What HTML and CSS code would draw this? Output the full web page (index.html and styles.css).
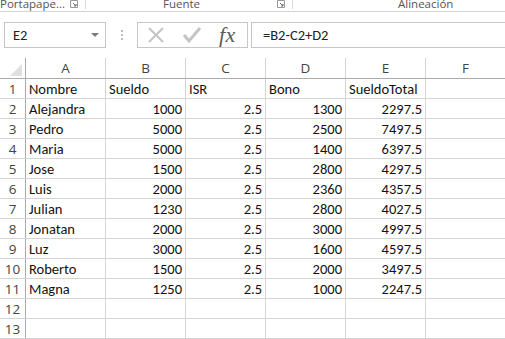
FILE: index.html
```html
<!DOCTYPE html>
<html lang="es">
<head>
  <meta charset="UTF-8">
  <title>Hoja de cálculo</title>
  <link rel="stylesheet" href="styles.css">
</head>
<body>
  <!-- grupos de la cinta -->
  <div class="ribbon">
    <div class="group g-clip">
      <span class="group-label">Portapape...</span>
      <svg class="launcher" width="8" height="8" viewBox="0 0 8 8"><path d="M0.5 0.5h7v7h-7z" fill="none" stroke="#9a9a9a"/><path d="M3 3l3 3M4 6h2v-2" fill="none" stroke="#6a6a6a"/></svg>
    </div>
    <div class="group g-font">
      <span class="group-label">Fuente</span>
      <svg class="launcher" width="8" height="8" viewBox="0 0 8 8"><path d="M0.5 0.5h7v7h-7z" fill="none" stroke="#9a9a9a"/><path d="M3 3l3 3M4 6h2v-2" fill="none" stroke="#6a6a6a"/></svg>
    </div>
    <div class="group g-align">
      <span class="group-label">Alineación</span>
    </div>
  </div>

  <!-- barra de fórmulas -->
  <div class="formula-bar">
    <div class="name-box">
      <span>E2</span>
      <span class="caret"></span>
    </div>
    <div class="grip"><i></i><i></i><i></i></div>
    <div class="fx-buttons">
      <svg width="18" height="18" viewBox="0 0 18 18"><path d="M2 2l14 14M16 2L2 16" stroke="#c4c4c4" stroke-width="2" fill="none"/></svg>
      <svg width="20" height="18" viewBox="0 0 20 18"><path d="M2 9l5 6L18 2" stroke="#c4c4c4" stroke-width="3" fill="none"/></svg>
      <span class="fx">fx</span>
    </div>
    <div class="formula-input">=B2-C2+D2</div>
  </div>

  <!-- hoja -->
  <table class="sheet">
    <thead>
      <tr>
        <th class="corner"><span class="tri"></span></th>
        <th>A</th><th>B</th><th>C</th><th>D</th><th>E</th><th>F</th>
      </tr>
    </thead>
    <tbody>
      <tr><th>1</th><td>Nombre</td><td>Sueldo</td><td>ISR</td><td>Bono</td><td>SueldoTotal</td><td></td></tr>
      <tr><th>2</th><td>Alejandra</td><td class="n">1000</td><td class="n">2.5</td><td class="n">1300</td><td class="n">2297.5</td><td></td></tr>
      <tr><th>3</th><td>Pedro</td><td class="n">5000</td><td class="n">2.5</td><td class="n">2500</td><td class="n">7497.5</td><td></td></tr>
      <tr><th>4</th><td>Maria</td><td class="n">5000</td><td class="n">2.5</td><td class="n">1400</td><td class="n">6397.5</td><td></td></tr>
      <tr><th>5</th><td>Jose</td><td class="n">1500</td><td class="n">2.5</td><td class="n">2800</td><td class="n">4297.5</td><td></td></tr>
      <tr><th>6</th><td>Luis</td><td class="n">2000</td><td class="n">2.5</td><td class="n">2360</td><td class="n">4357.5</td><td></td></tr>
      <tr><th>7</th><td>Julian</td><td class="n">1230</td><td class="n">2.5</td><td class="n">2800</td><td class="n">4027.5</td><td></td></tr>
      <tr><th>8</th><td>Jonatan</td><td class="n">2000</td><td class="n">2.5</td><td class="n">3000</td><td class="n">4997.5</td><td></td></tr>
      <tr><th>9</th><td>Luz</td><td class="n">3000</td><td class="n">2.5</td><td class="n">1600</td><td class="n">4597.5</td><td></td></tr>
      <tr><th>10</th><td>Roberto</td><td class="n">1500</td><td class="n">2.5</td><td class="n">2000</td><td class="n">3497.5</td><td></td></tr>
      <tr><th>11</th><td>Magna</td><td class="n">1250</td><td class="n">2.5</td><td class="n">1000</td><td class="n">2247.5</td><td></td></tr>
      <tr><th>12</th><td></td><td></td><td></td><td></td><td></td><td></td></tr>
      <tr><th>13</th><td></td><td></td><td></td><td></td><td></td><td></td></tr>
    </tbody>
  </table>
</body>
</html>
```

FILE: styles.css
```css
body {
  margin: 0;
  background: #fff;
  font-family: "Open Sans", "Noto Sans", sans-serif;
  overflow: hidden;
  width: 505px;
}
.ribbon {
  display: flex;
  height: 11px;
  border-bottom: 1px solid #d5d5d5;
  overflow: hidden;
}
.group {
  display: flex;
  align-items: flex-start;
  height: 9px;
  border-right: 1px solid #dadada;
  box-sizing: border-box;
}
.group-label {
  font-size: 11.5px;
  line-height: 12px;
  margin-top: -2px;
  color: #555;
  white-space: nowrap;
}
.launcher {
  margin-left: auto;
  margin-right: 7px;
  flex-shrink: 0;
}
.g-clip {
  width: 86px;
  padding-left: 0;
}
.g-font {
  width: 207px;
  padding-left: 77px;
}
.g-align {
  border-right: none;
  padding-left: 105px;
}
.formula-bar {
  display: flex;
  align-items: center;
  margin-top: 10px;
  height: 26px;
}
.name-box {
  margin-left: 4px;
  box-sizing: border-box;
  width: 102px;
  height: 26px;
  border: 1px solid #c6c6c6;
  display: flex;
  align-items: center;
  justify-content: space-between;
  padding: 0 6px 0 8px;
  font-family: "Carlito", "Lato", sans-serif;
  font-size: 14.5px;
  color: #222;
}
.caret {
  width: 0;
  height: 0;
  border-left: 4px solid transparent;
  border-right: 4px solid transparent;
  border-top: 4px solid #7a7a7a;
}
.grip {
  width: 31px;
  display: flex;
  flex-direction: column;
  align-items: center;
  gap: 2px;
}
.grip i {
  width: 2px;
  height: 2px;
  background: #bdbdbd;
}
.fx-buttons {
  width: 111px;
  height: 26px;
  box-sizing: border-box;
  border: 1px solid #c6c6c6;
  display: flex;
  align-items: center;
  padding-left: 9px;
  gap: 17px;
}
.fx {
  font-family: "Liberation Serif", serif;
  font-style: italic;
  font-size: 22px;
  color: #5a5a5a;
  letter-spacing: 0.5px;
}
.formula-input {
  margin-left: 3px;
  flex: 1;
  height: 26px;
  box-sizing: border-box;
  border: 1px solid #c6c6c6;
  border-right: none;
  padding-left: 11px;
  display: flex;
  align-items: center;
  font-family: "Carlito", "Lato", sans-serif;
  font-size: 14.5px;
  color: #222;
}
.sheet {
  margin-top: 10px;
  border-collapse: collapse;
  table-layout: fixed;
  width: 506px;
}
.sheet th, .sheet td {
  padding: 0;
  height: 19px;
  border-right: 1px solid #d4d4d4;
  border-bottom: 1px solid #d4d4d4;
  white-space: nowrap;
  overflow: hidden;
}
.sheet thead th {
  height: 20px;
  font-weight: normal;
  font-size: 13.5px;
  color: #444;
  text-align: center;
  border-bottom-color: #ababab;
  position: relative;
}
.sheet thead th:first-child { width: 25px; }
.sheet thead th + th { width: 79px; }
.sheet tbody th {
  font-weight: normal;
  font-size: 13.5px;
  color: #444;
  text-align: center;
  border-right-color: #ababab;
}
.sheet td {
  font-family: "Carlito", "Lato", sans-serif;
  font-size: 14.5px;
  color: #111;
  padding-left: 3px;
  vertical-align: bottom;
  line-height: 17px;
}
.sheet td.n {
  text-align: right;
  padding-left: 0;
  padding-right: 3px;
}
.corner { border-right-color: #ababab !important; }
.tri {
  position: absolute;
  right: 3px;
  bottom: 2px;
  width: 0;
  height: 0;
  border-left: 12px solid transparent;
  border-bottom: 12px solid #dfdfdf;
}
```
